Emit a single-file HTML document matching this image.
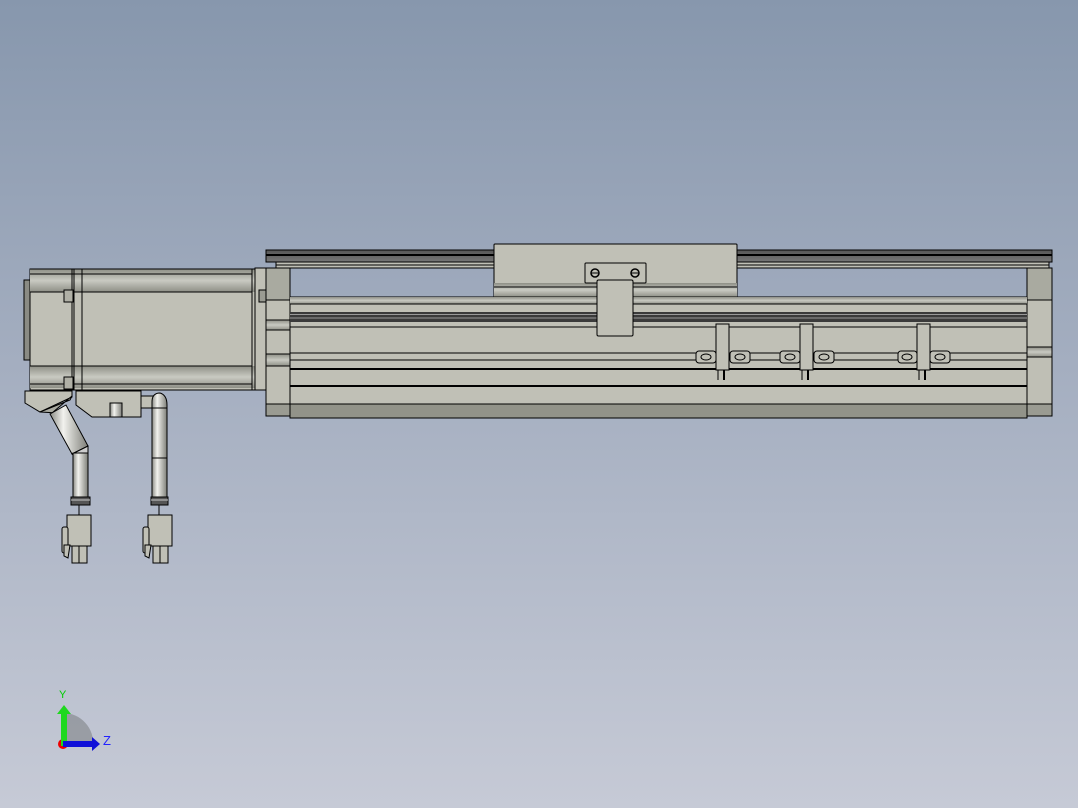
<!DOCTYPE html>
<html><head><meta charset="utf-8"><style>
html,body{margin:0;padding:0;width:1078px;height:808px;overflow:hidden}
body{background:linear-gradient(#8797ad 0%,#a4aec0 45%,#c6cad6 100%)}
svg{display:block}
</style></head><body>
<svg width="1078" height="808" viewBox="0 0 1078 808" xmlns="http://www.w3.org/2000/svg">
<defs>
<linearGradient id="band" x1="0" y1="0" x2="0" y2="1">
<stop offset="0" stop-color="#8e8f86"/><stop offset=".5" stop-color="#c9cac2"/><stop offset="1" stop-color="#8e8f86"/></linearGradient>
<linearGradient id="pipe" x1="0" y1="0" x2="1" y2="0">
<stop offset="0" stop-color="#8a8b85"/><stop offset=".35" stop-color="#f2f2ee"/><stop offset="1" stop-color="#7d7e78"/></linearGradient>
<linearGradient id="railtop" x1="0" y1="0" x2="0" y2="1">
<stop offset="0" stop-color="#555"/><stop offset="1" stop-color="#777"/></linearGradient>
</defs>
<g stroke="#000" stroke-width="1">
<rect x="266" y="250" width="786" height="12" fill="url(#railtop)"/>
<line x1="266" y1="255" x2="1052" y2="255" stroke-width="2"/>
<rect x="276" y="262" width="773" height="6" fill="#c0c0b6"/>
<line x1="276" y1="265" x2="1049" y2="265"/>
<rect x="266" y="268" width="24" height="148" fill="#bfbfb5"/>
<rect x="266" y="268" width="24" height="32" fill="#a9aaa0"/>
<rect x="266" y="320" width="24" height="10" fill="url(#band)"/>
<rect x="266" y="354" width="24" height="12" fill="url(#band)"/>
<rect x="266" y="404" width="24" height="12" fill="#9a9b92"/>
<rect x="1027" y="268" width="25" height="148" fill="#bfbfb5"/>
<rect x="1027" y="268" width="25" height="32" fill="#a9aaa0"/>
<rect x="1027" y="347" width="25" height="10" fill="url(#band)"/>
<rect x="1027" y="404" width="25" height="12" fill="#9a9b92"/>
<rect x="494" y="244" width="243" height="53" fill="#c0c0b6" rx="1"/>
<rect x="494" y="283" width="243" height="14" fill="url(#band)" stroke="none"/>
<line x1="494" y1="287" x2="737" y2="287"/>
<rect x="585" y="263" width="61" height="20" fill="#c0c0b6" rx="1"/>
<circle cx="595" cy="273" r="4" fill="#c0c0b6" stroke-width="1.5"/><line x1="591" y1="273" x2="599" y2="273"/>
<circle cx="635" cy="273" r="4" fill="#c0c0b6" stroke-width="1.5"/><line x1="631" y1="273" x2="639" y2="273"/>
<rect x="290" y="297" width="737" height="121" fill="#c0c0b6"/>
<rect x="290" y="297" width="737" height="7" fill="url(#band)" stroke="none"/>
<line x1="290" y1="304" x2="1027" y2="304"/>
<rect x="290" y="312" width="737" height="10" fill="#3a3a3a" stroke="none"/>
<line x1="290" y1="314.5" x2="1027" y2="314.5" stroke="#999"/>
<line x1="290" y1="318" x2="1027" y2="318" stroke="#999"/>
<line x1="290" y1="327" x2="1027" y2="327"/>
<line x1="290" y1="353" x2="1027" y2="353"/>
<line x1="290" y1="360" x2="1027" y2="360"/>
<line x1="290" y1="369" x2="1027" y2="369" stroke-width="2"/>
<line x1="290" y1="386" x2="1027" y2="386" stroke-width="2"/>
<rect x="290" y="404" width="737" height="14" fill="#929389"/>
<rect x="597" y="280" width="36" height="56" fill="#c0c0b6" rx="1.5"/>
<g fill="#c0c0b6">
<rect x="696" y="351" width="20" height="12" rx="3"/><ellipse cx="706" cy="357" rx="5" ry="3"/>
<rect x="730" y="351" width="20" height="12" rx="3"/><ellipse cx="740" cy="357" rx="5" ry="3"/>
<rect x="780" y="351" width="20" height="12" rx="3"/><ellipse cx="790" cy="357" rx="5" ry="3"/>
<rect x="814" y="351" width="20" height="12" rx="3"/><ellipse cx="824" cy="357" rx="5" ry="3"/>
<rect x="898" y="351" width="19" height="12" rx="3"/><ellipse cx="907" cy="357" rx="5" ry="3"/>
<rect x="930" y="351" width="20" height="12" rx="3"/><ellipse cx="940" cy="357" rx="5" ry="3"/>
<rect x="716" y="324" width="13" height="46"/><line x1="718" y1="370" x2="718" y2="380"/><line x1="724" y1="370" x2="724" y2="380" stroke-width="2"/>
<rect x="800" y="324" width="13" height="46"/><line x1="802" y1="370" x2="802" y2="380"/><line x1="808" y1="370" x2="808" y2="380" stroke-width="2"/>
<rect x="917" y="324" width="13" height="46"/><line x1="919" y1="370" x2="919" y2="380"/><line x1="925" y1="370" x2="925" y2="380" stroke-width="2"/>
</g>
<rect x="24" y="280" width="8" height="80" fill="#8a8b84"/>
<rect x="30" y="269" width="225" height="121" fill="#c0c0b6"/>
<rect x="30" y="269" width="225" height="23" fill="url(#band)" stroke="none"/>
<line x1="30" y1="269" x2="255" y2="269"/>
<line x1="30" y1="274" x2="252" y2="274"/>
<line x1="30" y1="292" x2="252" y2="292"/>
<rect x="30" y="366" width="225" height="22" fill="url(#band)" stroke="none"/>
<line x1="30" y1="366" x2="252" y2="366"/>
<line x1="30" y1="384" x2="252" y2="384"/>
<line x1="30" y1="390" x2="255" y2="390"/>
<line x1="72" y1="269" x2="72" y2="390"/><line x1="74" y1="269" x2="74" y2="390"/>
<line x1="82" y1="269" x2="82" y2="390"/>
<line x1="252" y1="269" x2="252" y2="390"/>
<rect x="64" y="290" width="9" height="12" fill="#b0b0a6"/>
<rect x="64" y="377" width="9" height="12" fill="#b0b0a6"/>
<rect x="255" y="268" width="11" height="122" fill="#c0c0b6"/>
<rect x="259" y="290" width="7" height="12" fill="#9a9b92"/>
<polygon points="25,391 72,391 72,397 40,412 25,403" fill="#c0c0b6"/>
<polygon points="40,412 70,400 72,396 52,413 58,413" fill="#a8a9a0"/>
<polygon points="76,391 141,391 141,417 92,417 76,405" fill="#c0c0b6"/>
<rect x="110" y="403" width="12" height="14" fill="url(#pipe)"/>
<rect x="141" y="396" width="14" height="12" fill="#c0c0b6"/>
<path d="M152 408 L152 402 Q152 393 160 393 Q167 395 167 405 L167 408 Z" fill="url(#pipe)"/>
<rect x="152" y="408" width="15" height="92" fill="url(#pipe)"/>
<line x1="152" y1="458" x2="167" y2="458"/>
<rect x="151" y="497" width="17" height="8" fill="#555"/>
<line x1="151" y1="500" x2="168" y2="500" stroke="#ccc"/>
<line x1="159" y1="505" x2="159" y2="515"/>
<polygon points="50,414 66,405 88,446 72,454" fill="url(#pipe)"/>
<polygon points="72,454 88,446 88,455 73,455" fill="#ccc"/>
<rect x="73" y="453" width="15" height="47" fill="url(#pipe)"/>
<rect x="71" y="497" width="19" height="8" fill="#555"/>
<line x1="71" y1="500" x2="90" y2="500" stroke="#ccc"/>
<line x1="79" y1="505" x2="79" y2="515"/>
<g fill="#c0c0b6">
<rect x="67" y="515" width="24" height="31"/><rect x="72" y="546" width="7" height="17"/><rect x="79" y="546" width="8" height="17"/>
<rect x="62" y="527" width="6" height="26" rx="2"/><path d="M64 545 L70 545 L68 558 L64 556 Z"/>
<rect x="148" y="515" width="24" height="31"/><rect x="153" y="546" width="7" height="17"/><rect x="160" y="546" width="8" height="17"/>
<rect x="143" y="527" width="6" height="26" rx="2"/><path d="M145 545 L151 545 L149 558 L145 556 Z"/>
</g>
</g>
<path d="M63 713 L63 746 L93 746 A30 30 0 0 0 63 713 Z" fill="#8f9298" opacity=".8"/>
<circle cx="63" cy="744" r="5" fill="#e00"/>
<rect x="61" y="712" width="6" height="34" fill="#1fd81f"/>
<polygon points="57,714 64,705 71,714" fill="#1fd81f"/>
<rect x="63" y="741" width="30" height="6" fill="#1010d8"/>
<polygon points="92,737 100,744 92,751" fill="#1010d8"/>
<text x="59" y="698" font-family="Liberation Sans, sans-serif" font-size="11" fill="#0c0">Y</text>
<text x="103" y="745" font-family="Liberation Sans, sans-serif" font-size="13" fill="#22f">Z</text>
</svg>
</body></html>
